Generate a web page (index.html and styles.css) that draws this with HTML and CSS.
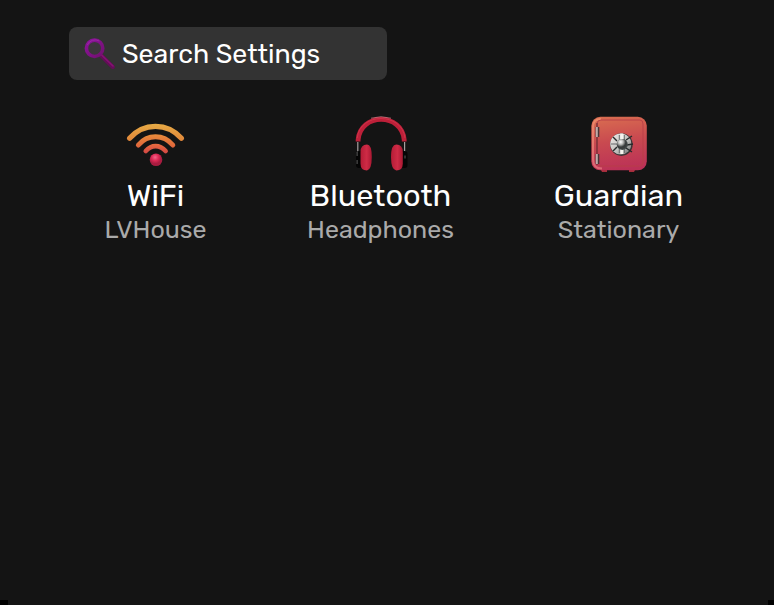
FILE: index.html
```html
<!DOCTYPE html>
<html lang="en">
<head>
<meta charset="utf-8">
<title>Settings</title>
<link rel="stylesheet" href="styles.css">
</head>
<body>
<main class="settings">
  <label class="search">
    <svg class="search-icon" viewBox="0 0 32 34">
      <defs><linearGradient id="lens" x1="0" y1="0" x2="1" y2="1"><stop offset="0" stop-color="#8d139c"/><stop offset="1" stop-color="#721070"/></linearGradient></defs>
      <path d="M18.2 18.5 29.8 30" stroke="#640d58" stroke-width="4" stroke-linecap="round"/>
      <path d="M18.6 18 30 29" stroke="#851274" stroke-width="1.6" stroke-linecap="round"/>
      <circle cx="11.6" cy="11.3" r="8.2" fill="#3c363b" stroke="url(#lens)" stroke-width="3.6"/>
      <path d="M4.3 8a8.5 8.5 0 0 1 12-4" fill="none" stroke="#a32eae" stroke-width=".7"/>
    </svg>
    <span class="search-text">Search Settings</span>
  </label>
  <section class="tiles">
    <article class="tile wifi">
      <svg class="icon" viewBox="0 0 60 60">
        <defs>
          <linearGradient id="w1" gradientUnits="userSpaceOnUse" x1="0" y1="9" x2="0" y2="28"><stop offset="0" stop-color="#e6aa45"/><stop offset="1" stop-color="#e08138"/></linearGradient>
          <linearGradient id="w2" gradientUnits="userSpaceOnUse" x1="0" y1="19" x2="0" y2="33"><stop offset="0" stop-color="#e98d3b"/><stop offset="1" stop-color="#de613b"/></linearGradient>
          <linearGradient id="w3" gradientUnits="userSpaceOnUse" x1="0" y1="29" x2="0" y2="39"><stop offset="0" stop-color="#e76b3f"/><stop offset="1" stop-color="#d04444"/></linearGradient>
          <radialGradient id="ball" cx=".43" cy=".3"><stop offset="0" stop-color="#f3668a"/><stop offset=".55" stop-color="#dc2955"/><stop offset="1" stop-color="#a91c40"/></radialGradient>
        </defs>
        <g fill="none" stroke-linecap="round">
          <path d="M3.6 23.3C17.5 7.3 41.5 7.3 55.4 23.3" stroke="url(#w1)" stroke-width="5.2"/>
          <path d="M12.4 30C21.5 19 37.5 19 46.8 30" stroke="url(#w2)" stroke-width="5"/>
          <path d="M19.8 36C25.5 29.6 33.7 29.6 39.6 36" stroke="url(#w3)" stroke-width="4.7"/>
        </g>
        <circle cx="30" cy="44.8" r="6.3" fill="url(#ball)"/>
      </svg>
      <h2>WiFi</h2><p>LVHouse</p>
    </article>
    <article class="tile bluetooth">
      <svg class="icon" viewBox="0 0 60 60">
        <defs><linearGradient id="cup"><stop offset="0" stop-color="#b51c36"/><stop offset=".55" stop-color="#cf2b46"/><stop offset="1" stop-color="#a91832"/></linearGradient></defs>
        <path d="M6.8 27v12M53.6 27v12" stroke="#a7a0a0" stroke-width="1.2"/>
        <path d="M7.1 26.5V25C9-2.5 51.3-2.5 53.2 25v1.5" fill="none" stroke="#bd2039" stroke-width="4.8"/>
        <path d="M6.2 23C9-3 51-3 54 23" fill="none" stroke="#cf3249" stroke-width="1"/>
        <path d="M20 3.2q10-3 20 0" fill="none" stroke="#ed929a" stroke-width=".6"/>
        <rect x="5" y="36" width="9" height="17" rx="3" fill="#050505"/>
        <rect x="47" y="36" width="9.5" height="17" rx="3" fill="#050505"/>
        <path d="M9.5 37q0-7.5 6.5-7.5 4.8 0 4.8 12.5t-4.8 13.5q-6.5 0-6.5-7z" fill="url(#cup)"/>
        <path d="M51.8 37q0-7.5-6.5-7.5-5.3 0-5.3 12.5t5.3 13.5q6.5 0 6.5-7z" fill="url(#cup)"/>
        <path d="M6.1 37v4m0 4v4M54 40.5v3" stroke="#858585" stroke-width=".7"/>
      </svg>
      <h2>Bluetooth</h2><p>Headphones</p>
    </article>
    <article class="tile guardian">
      <svg class="icon" viewBox="0 0 60 60">
        <defs>
          <linearGradient id="safe" x1=".35" y1="0" x2=".5" y2="1"><stop offset="0" stop-color="#d86b50"/><stop offset=".45" stop-color="#c94a50"/><stop offset="1" stop-color="#bb3157"/></linearGradient>
          <linearGradient id="edge" x1="0" y1="0" x2="0" y2="1"><stop offset="0" stop-color="#ec8867"/><stop offset="1" stop-color="#dd6674"/></linearGradient>
          <radialGradient id="hub" cx=".38" cy=".3"><stop offset="0" stop-color="#fff"/><stop offset=".5" stop-color="#b7b8b6"/><stop offset="1" stop-color="#383c3c"/></radialGradient>
          <linearGradient id="metal" x1="0" y1="0" x2="1" y2="1"><stop offset="0" stop-color="#f4efec"/><stop offset=".6" stop-color="#bcbcba"/><stop offset="1" stop-color="#6a6e6d"/></linearGradient>
        </defs>
        <path d="M11 53h7v4h-5zm29 0h7l-2 4h-5z" fill="#a52e3b"/>
        <rect x="2.3" y="1.8" width="55.5" height="53.5" rx="9" fill="url(#safe)"/>
        <path d="M13 53.5q-9 0-9-9V12q0-8 8-8" fill="none" stroke="url(#edge)" stroke-width="2"/>
        <path d="M8 50V9q0-4 4-4h39q3 0 3 4v38q0 4-4 4H12q-4 0-4-4" fill="none" stroke="#b83f48" stroke-width=".9"/>
        <path d="M8 8v42" stroke="#6c3036" stroke-width="1.2"/>
        <path d="M8.4 12v10m0 17v10" stroke="#493538" stroke-width="3.8"/>
        <path d="M7.8 12v10m0 17v10" stroke="#bfaaa8" stroke-width="2"/>
        <circle cx="32.4" cy="29.6" r="11.3" fill="#3c3335"/>
        <circle cx="31.8" cy="29" r="10.6" fill="url(#metal)"/>
        <path d="M30.3 20v18M35.3 20v18M22 29h6" stroke="#65696a" stroke-width="1"/>
        <path d="M32.8 18.5v20.5" stroke="#f4f3ee" stroke-width="3"/>
        <path d="m24 22 4 4m-4 10 4-4m9-7 6-4m-6 12 6 4m-5-7 6-1" stroke="#262b2c" stroke-width="1.4"/>
        <circle cx="33.3" cy="29.4" r="5.5" fill="#454c4c"/>
        <circle cx="32.9" cy="29" r="5" fill="url(#hub)"/>
      </svg>
      <h2>Guardian</h2><p>Stationary</p>
    </article>
  </section>
</main>
<footer class="base"></footer>
</body>
</html>
```
FILE: styles.css
```css
* { box-sizing: border-box; }
body {
  margin: 0;
  height: 605px;
  display: flex;
  flex-direction: column;
  overflow: hidden;
  background: #141414;
  color: #fff;
  font-family: Rubik, Roboto, sans-serif;
}
.settings { flex: 1; padding: 27px 69px 0; }
.search {
  display: flex;
  align-items: center;
  width: 318px;
  height: 53px;
  padding-left: 14px;
  border-radius: 8px;
  background: #333;
}
.search-icon { width: 32px; height: 34px; margin-right: 7px; }
.search-text { font-size: 26.7px; line-height: 32px; white-space: nowrap; }
.tiles {
  display: flex;
  justify-content: space-between;
  padding: 35px 21px 0 34px;
}
.tile { display: flex; flex-direction: column; align-items: center; }
.wifi { width: 105px; }
.bluetooth { width: 149px; }
.guardian { width: 131px; }
.icon { display: block; width: 60px; height: 60px; }
h2, p { margin: 0; font-weight: 400; white-space: nowrap; }
h2 { margin-top: 3px; font-size: 30.8px; line-height: 36px; }
p { font-size: 25px; line-height: 32px; color: #aaa; }
.base {
  height: 5px;
  border: solid #000;
  border-width: 0 6px 0 8px;
}
```
